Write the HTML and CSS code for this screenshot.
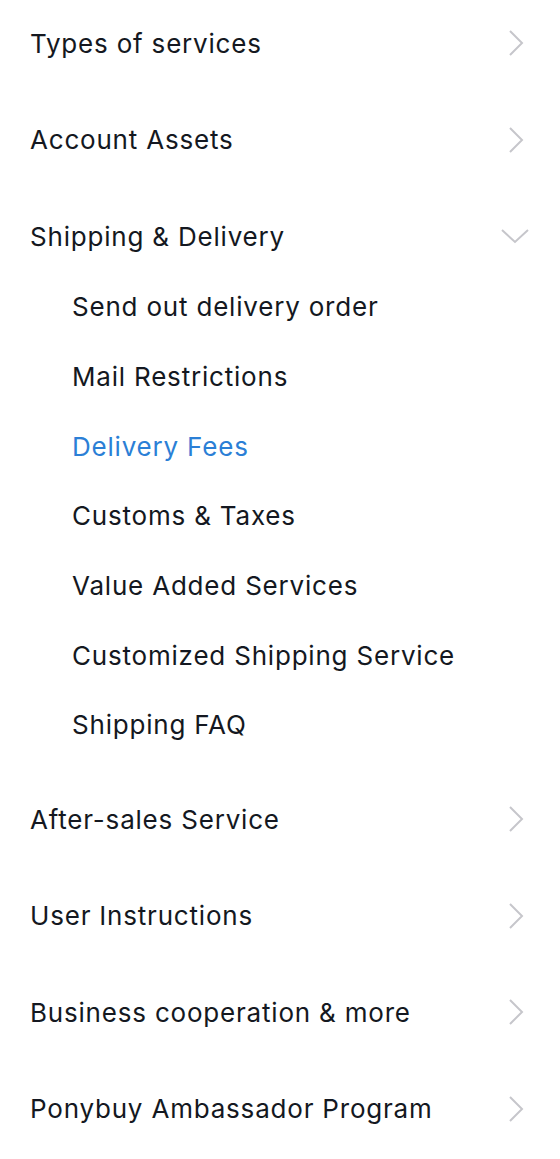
FILE: index.html
```html
<!DOCTYPE html>
<html lang="en">
<head>
  <meta charset="UTF-8">
  <meta name="viewport" content="width=device-width, initial-scale=1.0">
  <title>Help Center</title>
  <link rel="stylesheet" href="styles.css">
</head>
<body>
  <nav class="menu">
    <div class="group">
      <a class="head" href="#">
        <span>Types of services</span>
        <svg class="arrow" viewBox="0 0 16 28"><path d="M2 2 L14 14 L2 26"/></svg>
      </a>
    </div>
    <div class="group">
      <a class="head" href="#">
        <span>Account Assets</span>
        <svg class="arrow" viewBox="0 0 16 28"><path d="M2 2 L14 14 L2 26"/></svg>
      </a>
    </div>
    <div class="group open">
      <a class="head" href="#">
        <span>Shipping &amp; Delivery</span>
        <svg class="arrow down" viewBox="0 0 30 18"><path d="M2 3 L15 15 L28 3"/></svg>
      </a>
      <ul class="submenu">
        <li><a href="#">Send out delivery order</a></li>
        <li><a href="#">Mail Restrictions</a></li>
        <li><a class="active" href="#">Delivery Fees</a></li>
        <li><a href="#">Customs &amp; Taxes</a></li>
        <li><a href="#">Value Added Services</a></li>
        <li><a href="#">Customized Shipping Service</a></li>
        <li><a href="#">Shipping FAQ</a></li>
      </ul>
    </div>
    <div class="group">
      <a class="head" href="#">
        <span>After-sales Service</span>
        <svg class="arrow" viewBox="0 0 16 28"><path d="M2 2 L14 14 L2 26"/></svg>
      </a>
    </div>
    <div class="group">
      <a class="head" href="#">
        <span>User Instructions</span>
        <svg class="arrow" viewBox="0 0 16 28"><path d="M2 2 L14 14 L2 26"/></svg>
      </a>
    </div>
    <div class="group">
      <a class="head" href="#">
        <span>Business cooperation &amp; more</span>
        <svg class="arrow" viewBox="0 0 16 28"><path d="M2 2 L14 14 L2 26"/></svg>
      </a>
    </div>
    <div class="group">
      <a class="head" href="#">
        <span>Ponybuy Ambassador Program</span>
        <svg class="arrow" viewBox="0 0 16 28"><path d="M2 2 L14 14 L2 26"/></svg>
      </a>
    </div>
  </nav>
</body>
</html>
```

FILE: styles.css
```css
body {
  margin: 0;
  padding: 0;
  background-color: #fff;
  font-family: Inter, "Open Sans", sans-serif;
  color: #141821;
}

a {
  color: inherit;
  text-decoration: none;
}

.menu {
  display: flex;
  flex-direction: column;
  gap: 10.5px;
  padding: 0 30px;
}

.head {
  display: flex;
  align-items: center;
  justify-content: space-between;
  height: 86px;
  font-size: 26px;
  letter-spacing: 0.8px;
}

.arrow {
  width: 16px;
  height: 28px;
  margin-right: 6px;
  fill: none;
  stroke: #c6c6cb;
  stroke-width: 2;
}

.arrow.down {
  width: 30px;
  height: 18px;
  margin-right: 0;
}

.submenu {
  list-style: none;
  margin: -7px 0 0;
  padding: 0 0 6px 42px;
}

.submenu li a {
  display: flex;
  align-items: center;
  height: 69.66px;
  font-size: 26px;
  letter-spacing: 0.8px;
}

.submenu li a.active {
  color: #2b7fd6;
}
```
